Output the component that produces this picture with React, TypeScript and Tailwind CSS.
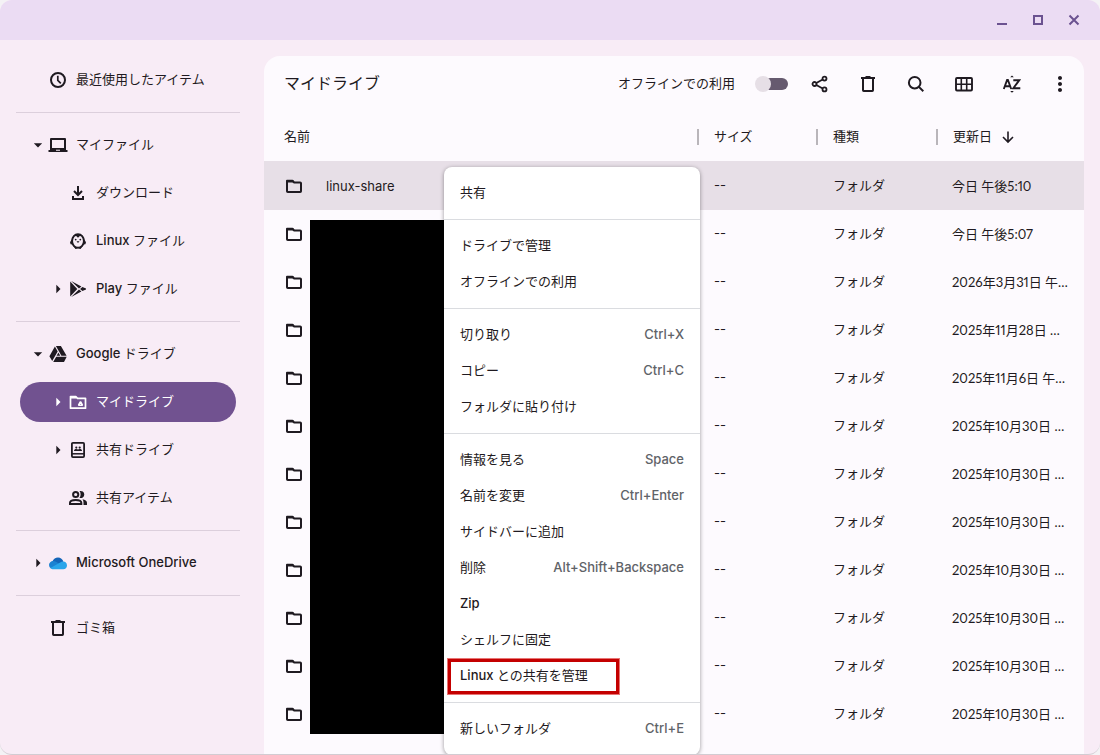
import type { ReactNode } from "react";
import clsx from "clsx";
import { MdArrowDropDown, MdArrowRight, MdMoreVert } from "react-icons/md";

type NavEntry = {
  label: string;
  icon: ReactNode;
  level?: 0 | 1;
  caret?: "open" | "closed";
  active?: boolean;
};

/* ---------- Icons ---------- */

function ClockIcon() {
  return (
    <svg viewBox="0 0 20 20" className="size-5" fill="none" stroke="currentColor" strokeWidth="2">
      <circle cx="10" cy="10" r="7" />
      <path strokeWidth="1.700" d="M9.800 5.800v4.500l3 3" />
    </svg>
  );
}

function FolderIcon() {
  return (
    <svg viewBox="0 0 20 20" className="size-5" fill="none" stroke="currentColor" strokeWidth="2">
      <path strokeLinejoin="round" d="M3 5v10.200c0 .4.300.8.800.8h12.400c.500 0 .8-.4.8-.8V7.300c0-.5-.3-.8-.8-.8h-6L8.500 4.800H3Z" />
      <path d="M3 5.500h6.500" />
    </svg>
  );
}

function PeopleIcon() {
  return (
    <svg viewBox="0 0 20 20" className="size-5" fill="none" stroke="currentColor" strokeWidth="2">
      <circle cx="7.700" cy="6.500" r="2.600" />
      <path d="M2 16v-1.200c0-1.800 3-2.800 5.700-2.800s5.600 1 5.600 2.800V16H2Z" />
      <path
        fill="currentColor"
        stroke="none"
        d="M11.500 3.100a3.600 3.600 0 1 1 0 6.800c1.500-1.900 1.500-4.900 0-6.800ZM14.500 11.300c2.600.5 4.500 1.700 4.500 3.500V17h-3.500v-2.200c0-1.400-.3-2.500-1-3.500Z"
      />
    </svg>
  );
}

function ShareIcon() {
  return (
    <svg viewBox="0 0 20 20" className="size-5" fill="none" stroke="currentColor" strokeWidth="1.800">
      <circle cx="4.500" cy="10" r="2" />
      <circle cx="14.500" cy="4.600" r="2" />
      <circle cx="14.500" cy="15.400" r="2" />
      <path d="m6.300 9 6.400-3.500M6.300 11l6.400 3.500" />
    </svg>
  );
}

function SearchIcon() {
  return (
    <svg viewBox="0 0 20 20" className="size-5" fill="none" stroke="currentColor" strokeWidth="2">
      <circle cx="8.700" cy="8.700" r="5.800" />
      <path d="m12.900 12.900 4.400 4.400" />
    </svg>
  );
}

function TrashIcon() {
  return (
    <svg viewBox="0 0 20 20" className="size-5" fill="none" stroke="currentColor" strokeWidth="2">
      <path d="M3 4h14M7.500 3h5M5 4v12.300c0 .4.300.7.700.7h8.600c.4 0 .7-.3.700-.7V4" />
    </svg>
  );
}

function LaptopIcon() {
  return (
    <svg viewBox="0 0 20 20" className="size-5" fill="currentColor">
      <path
        fillRule="evenodd"
        d="M3.200 3h13.600c.7 0 1.200.5 1.200 1.200V15h1.500v2H.5v-2H2V4.200C2 3.500 2.500 3 3.200 3ZM4 5v8h12V5H4Zm4 9.700v1h4v-1H8Z"
      />
    </svg>
  );
}

function DownloadIcon() {
  return (
    <svg viewBox="0 0 20 20" className="size-5" fill="none" stroke="currentColor" strokeWidth="2">
      <path d="M10 3v9M6 8l4 4 4-4M5 13v3h10v-3" />
    </svg>
  );
}

function PenguinIcon() {
  return (
    <svg viewBox="0 0 20 20" className="size-5" fill="none" stroke="currentColor">
      <ellipse cx="10" cy="10" rx="5.900" ry="6.800" strokeWidth="1.900" />
      <path fill="currentColor" stroke="none" d="M4.500 7.200 2 11.200l.6 2 2.400.3ZM15.500 7.200l2.500 4-.6 2-2.400.3ZM6.800 3.800h6.400L10 6.700ZM8.500 10.300h3L10 12ZM6 16l1.500 2h1L9 16.500ZM14 16l-1.500 2h-1l-.5-1.500Z" />
      <circle cx="7.700" cy="8.600" r=".9" fill="currentColor" stroke="none" />
      <circle cx="12.300" cy="8.600" r=".9" fill="currentColor" stroke="none" />
    </svg>
  );
}

function PlayStoreIcon() {
  return (
    <svg viewBox="0 0 20 20" className="size-5" fill="currentColor">
      <path d="M2.200 2.600v14.800L9.300 10ZM3.200 2l10.200 5.500-2.400 1.900ZM3.200 18l10.200-5.500-2.400-1.900ZM14.400 8l3.600 1.600v.8L14.400 12l-2.300-2Z" />
    </svg>
  );
}

function DriveIcon() {
  return (
    <svg viewBox="0 0 20 20" className="size-5" fill="currentColor">
      <path d="m6.900 2.500 2.800 4.900-5.500 9.700-2.800-4.900ZM7.900 2h5l5.700 9.700h-5.200ZM8.200 12.800h10.500L16 18H5.200ZM10.400 8.600l1.900 3.200H8.600Z" />
    </svg>
  );
}

function MyDriveIcon() {
  return (
    <svg viewBox="0 0 20 20" className="size-5" fill="none" stroke="currentColor" strokeWidth="1.700">
      <path strokeLinejoin="round" d="M2.500 4.500h5.300L9.500 6.300h8v9.900h-15V4.500Z" />
      <path d="M2.500 5.700h6" />
      <path strokeWidth="1.600" strokeLinejoin="round" d="M12.300 10h.4l1.600 2.800-.2.500h-3.200l-.2-.5Z" />
    </svg>
  );
}

function SharedDriveIcon() {
  return (
    <svg viewBox="0 0 20 20" className="size-5" fill="none" stroke="currentColor" strokeWidth="1.800">
      <rect x="3.900" y="2.900" width="12.200" height="14.200" rx="1" />
      <path strokeWidth="1.500" d="M4 13.800h12" />
      <g fill="currentColor" stroke="none">
        <circle cx="8.300" cy="7.600" r="1.100" />
        <circle cx="11.700" cy="7.600" r="1.100" />
        <path d="M6 11c0-1.400 1-2 2.300-2 .8 0 1.300.2 1.700.6.400-.4.9-.6 1.700-.6 1.300 0 2.300.6 2.300 2Z" />
      </g>
    </svg>
  );
}

function OneDriveIcon() {
  return (
    <svg viewBox="0 0 20 20" className="size-5">
      <path fill="#1465b8" d="M4.500 8.200c1-2.300 3-3.700 5.500-3.700 2.600 0 4.700 1.700 5.400 4L10 12 4 9Z" />
      <path fill="#1b82d2" d="M5.200 7.900c1.100 0 2 .3 2.800.8l4.500 2.700L3 15.600A4.200 4.200 0 0 1 1 12c0-2.300 1.900-4.100 4.200-4.100Z" />
      <path fill="#2aa5ea" d="M2.400 14.900 11.800 9.700c3.400-2.600 7.200-.9 7.200 2.700 0 2.100-1.600 3.800-3.700 3.800H5.400c-1.200 0-2.300-.5-3-1.300Z" />
    </svg>
  );
}

function GridIcon() {
  return (
    <svg viewBox="0 0 20 20" className="size-5" fill="none" stroke="currentColor">
      <rect x="2" y="4" width="16" height="12.500" rx="1" strokeWidth="1.900" />
      <path strokeWidth="1.600" d="M2 10.200h16M7.300 4v12M12.700 4v12" />
    </svg>
  );
}

function SortIcon() {
  return (
    <svg viewBox="0 0 20 20" className="size-5" fill="none" stroke="currentColor" strokeWidth="1.900">
      <path d="m1.800 15 3.300-9h.8l3.300 9M3 12.300h5M11.300 6.200h6l-6 8h7" />
      <path fill="currentColor" stroke="none" d="M8.200 3.300 10 1.600l1.800 1.700ZM8.200 17l1.800 1.700 1.800-1.700Z" />
    </svg>
  );
}

function ArrowDownIcon() {
  return (
    <svg viewBox="0 0 16 16" className="size-4" fill="none" stroke="currentColor" strokeWidth="1.600">
      <path d="M8 2.500v10.500M3 8l5 5 5-5" />
    </svg>
  );
}

/* ---------- Data ---------- */

const navGroups: NavEntry[][] = [
  [{ label: "最近使用したアイテム", icon: <ClockIcon /> }],
  [
    { label: "マイファイル", icon: <LaptopIcon />, caret: "open" },
    { label: "ダウンロード", icon: <DownloadIcon />, level: 1 },
    { label: "Linux ファイル", icon: <PenguinIcon />, level: 1 },
    { label: "Play ファイル", icon: <PlayStoreIcon />, level: 1, caret: "closed" },
  ],
  [
    { label: "Google ドライブ", icon: <DriveIcon />, caret: "open" },
    { label: "マイドライブ", icon: <MyDriveIcon />, level: 1, caret: "closed", active: true },
    { label: "共有ドライブ", icon: <SharedDriveIcon />, level: 1, caret: "closed" },
    { label: "共有アイテム", icon: <PeopleIcon />, level: 1 },
  ],
  [{ label: "Microsoft OneDrive", icon: <OneDriveIcon />, caret: "closed" }],
  [{ label: "ゴミ箱", icon: <TrashIcon /> }],
];

const dates = [
  "今日 午後5:10",
  "今日 午後5:07",
  "2026年3月31日 午…",
  "2025年11月28日 …",
  "2025年11月6日 午…",
  "2025年10月30日 …",
  "2025年10月30日 …",
  "2025年10月30日 …",
  "2025年10月30日 …",
  "2025年10月30日 …",
  "2025年10月30日 …",
  "2025年10月30日 …",
];

const menuGroups: { label: string; keys?: string; marked?: boolean }[][] = [
  [{ label: "共有" }],
  [{ label: "ドライブで管理" }, { label: "オフラインでの利用" }],
  [
    { label: "切り取り", keys: "Ctrl+X" },
    { label: "コピー", keys: "Ctrl+C" },
    { label: "フォルダに貼り付け" },
  ],
  [
    { label: "情報を見る", keys: "Space" },
    { label: "名前を変更", keys: "Ctrl+Enter" },
    { label: "サイドバーに追加" },
    { label: "削除", keys: "Alt+Shift+Backspace" },
    { label: "Zip" },
    { label: "シェルフに固定" },
    { label: "Linux との共有を管理", marked: true },
  ],
  [{ label: "新しいフォルダ", keys: "Ctrl+E" }],
];

const tools = [
  { label: "共有", icon: <ShareIcon /> },
  { label: "削除", icon: <TrashIcon /> },
  { label: "検索", icon: <SearchIcon /> },
  { label: "グリッド表示", icon: <GridIcon /> },
  { label: "並べ替え", icon: <SortIcon /> },
  { label: "その他", icon: <MdMoreVert className="size-6" /> },
];

/* ---------- Parts ---------- */

// Latin words are set in medium, Japanese stays regular
function Label({ text }: { text: string }) {
  const latin = text.match(/^[A-Za-z ]+/)?.[0] ?? "";
  return (
    <span className="pb-0.5 whitespace-pre">
      {latin && <span className="font-medium">{latin}</span>}
      {text.slice(latin.length)}
    </span>
  );
}

function TitleBar() {
  return (
    <header className="flex h-10 shrink-0 items-center justify-end bg-[#ebdcf3] pr-2 text-[#6b5290]">
      <button aria-label="最小化" className="flex h-10 w-9 items-center justify-center">
        <svg viewBox="0 0 12 12" className="size-3" fill="none" stroke="currentColor" strokeWidth="2">
          <path d="M1 10h10" />
        </svg>
      </button>
      <button aria-label="最大化" className="flex h-10 w-9 items-center justify-center">
        <svg viewBox="0 0 12 12" className="size-3" fill="none" stroke="currentColor" strokeWidth="2">
          <path d="M2 2h8v8H2Z" />
        </svg>
      </button>
      <button aria-label="閉じる" className="flex h-10 w-9 items-center justify-center">
        <svg viewBox="0 0 12 12" className="size-3" fill="none" stroke="currentColor" strokeWidth="2">
          <path d="m1.500 1.500 9 9M10.500 1.500l-9 9" />
        </svg>
      </button>
    </header>
  );
}

function NavItem({ label, icon, level = 0, caret, active }: NavEntry) {
  return (
    <li className="px-1 py-1">
      <button
        className={clsx(
          "flex h-10 w-full items-center rounded-full",
          level === 1 ? "pl-7" : "pl-2",
          active && "bg-[#715290] text-white",
        )}
      >
        <span className="flex w-5 justify-center">
          {caret === "open" && <MdArrowDropDown className="size-5" />}
          {caret === "closed" && <MdArrowRight className="size-5" />}
        </span>
        <span className="mr-2">{icon}</span>
        <Label text={label} />
      </button>
    </li>
  );
}

function Sidebar() {
  return (
    <nav className="w-64 shrink-0 px-4 pt-4">
      {navGroups.map((group, i) => (
        <ul key={i} className={clsx(i > 0 && "mt-2 border-t border-[#dccfdc] pt-2")}>
          {group.map((item) => (
            <NavItem key={item.label} {...item} />
          ))}
        </ul>
      ))}
    </nav>
  );
}

function Toolbar() {
  return (
    <div className="flex h-14 items-center pl-5">
      <h1 className="mr-auto pb-0.5 text-base">マイドライブ</h1>
      <label className="mr-2 flex items-center gap-5">
        <span className="pb-0.5">オフラインでの利用</span>
        <input
          type="checkbox"
          className="relative h-4 w-[33px] appearance-none before:absolute before:inset-y-[2px] before:right-0 before:left-1 before:rounded-full before:bg-[#665a6f] after:absolute after:left-0 after:size-4 after:rounded-full after:bg-[#e6dfe6]"
        />
      </label>
      {tools.map((tool) => (
        <button key={tool.label} aria-label={tool.label} className="flex size-12 items-center justify-center">
          {tool.icon}
        </button>
      ))}
    </div>
  );
}

function HeadCell({ children }: { children: ReactNode }) {
  return (
    <th className="p-0 text-left font-normal">
      <div className="flex h-4 items-center gap-2 border-l-2 border-[#b9b5ba] pl-[15px]">{children}</div>
    </th>
  );
}

function FileTable() {
  return (
    <table className="w-full table-fixed border-collapse">
      <colgroup>
        <col />
        <col className="w-[119px]" />
        <col className="w-[120px]" />
        <col className="w-[148px]" />
      </colgroup>
      <thead>
        <tr className="h-[49px]">
          <th className="p-0 pb-0.5 pl-5 text-left font-normal">名前</th>
          <HeadCell>
            <span className="pb-0.5">サイズ</span>
          </HeadCell>
          <HeadCell>
            <span className="pb-0.5">種類</span>
          </HeadCell>
          <HeadCell>
            <span className="pb-0.5">更新日</span>
            <ArrowDownIcon />
          </HeadCell>
        </tr>
      </thead>
      <tbody>
        {dates.map((date, i) => (
          <tr key={i} className={i === 0 ? "h-[49px] bg-[#e7dfe7]" : "h-12"}>
            <td className="p-0 pl-5">
              <div className="flex items-center gap-[22px]">
                <FolderIcon />
                {i === 0 && "linux-share"}
              </div>
            </td>
            <td className="p-0 pb-0.5 pl-[17px]">--</td>
            <td className="p-0 pb-0.5 pl-[17px]">フォルダ</td>
            <td className="p-0 pl-4 font-[Lato,'Noto_Sans_CJK_JP',sans-serif] whitespace-nowrap proportional-nums">
              {date}
            </td>
          </tr>
        ))}
      </tbody>
    </table>
  );
}

function ContextMenu() {
  return (
    <div
      role="menu"
      className="absolute top-[111px] left-[180px] w-64 rounded-lg bg-white shadow-[0_1px_4px_rgba(0,0,0,0.4)]"
    >
      {menuGroups.map((group, i) => (
        <div key={i} className={clsx("py-2", i > 0 && "border-t border-[#dadce0]")}>
          {group.map((item) => (
            <button
              key={item.label}
              role="menuitem"
              className="relative flex h-9 w-full items-center justify-between px-4"
            >
              <Label text={item.label} />
              {item.keys && (
                <kbd className="pb-0.5 font-[Inter,sans-serif] font-medium text-[#5f6368]">{item.keys}</kbd>
              )}
              {item.marked && (
                <span className="absolute top-px left-1 h-[35px] w-[171px] border-[3px] border-[#c40000] ring-1 ring-[#e87474]" />
              )}
            </button>
          ))}
        </div>
      ))}
    </div>
  );
}

export default function App() {
  return (
    <div className="bg-[#f4f2f5] font-[Inter,'Noto_Sans_CJK_JP',sans-serif] text-[13px] leading-5 text-[#1f1a21]">
      <div className="flex h-screen flex-col overflow-hidden rounded-xl border-b border-[#d2ccd2] bg-[#f8ecf6]">
        <TitleBar />
        <div className="flex min-h-0 grow">
          <Sidebar />
          <main className="relative mt-4 mr-4 ml-2 min-w-0 grow">
            <section className="h-full overflow-hidden rounded-t-2xl bg-[#fdfafe]">
              <Toolbar />
              <FileTable />
            </section>
            {/* Redacted names */}
            <div className="absolute top-[164px] left-[46px] h-[514px] w-[140px] bg-black" />
            <ContextMenu />
          </main>
        </div>
      </div>
    </div>
  );
}
